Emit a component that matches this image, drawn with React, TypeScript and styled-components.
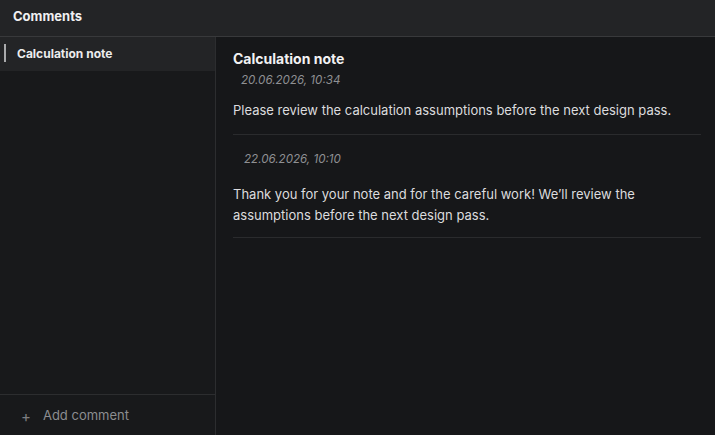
import React from "react";
import styled, { createGlobalStyle } from "styled-components";

const Global = createGlobalStyle`
  html, body { margin: 0; padding: 0; background: #161719; }
  body { font-family: Inter, "Noto Sans", sans-serif; -webkit-font-smoothing: antialiased; }
  #root { height: 435px; }
`;

const Frame = styled.div`
  width: 715px;
  height: 435px;
  display: flex;
  flex-direction: column;
  background: #161719;
  color: #e6e6e7;
  overflow: hidden;
`;

const Header = styled.header`
  height: 37px;
  box-sizing: border-box;
  flex: none;
  display: flex;
  align-items: center;
  padding: 0 13px 4px;
  background: #232426;
  border-bottom: 1px solid #38393b;
  font-size: 13px;
  font-weight: 700;
  color: #f0f0f1;
`;

const Body = styled.div`
  flex: 1;
  display: flex;
  min-height: 0;
`;

const Sidebar = styled.aside`
  width: 215px;
  flex: none;
  display: flex;
  flex-direction: column;
  background: #18191b;
  border-right: 1px solid #2c2d2f;
`;

const List = styled.div`
  flex: 1;
  display: flex;
  flex-direction: column;
`;

const Item = styled.div<{ $active?: boolean }>`
  position: relative;
  height: 34px;
  display: flex;
  align-items: center;
  padding-left: 17px;
  padding-bottom: 1px;
  box-sizing: border-box;
  background: ${(p) => (p.$active ? "#232426" : "transparent")};
  font-size: 12px;
  font-weight: 700;
  color: #ececed;
  &::before {
    content: "";
    display: ${(p) => (p.$active ? "block" : "none")};
    position: absolute;
    left: 4px;
    top: 7px;
    width: 2px;
    height: 18px;
    background: #a9aaac;
  }
`;

const Footer = styled.div`
  height: 41px;
  flex: none;
  display: flex;
  align-items: center;
  gap: 12px;
  padding-left: 21px;
  box-sizing: border-box;
  border-top: 1px solid #2c2d2f;
  font-size: 13px;
  color: #8c8d90;
`;

const Plus = styled.span`
  font-size: 15px;
  line-height: 1;
  margin-top: 2px;
  color: #7d7e81;
`;

const Main = styled.main`
  flex: 1;
  display: flex;
  flex-direction: column;
  padding: 13px 14px 0 17px;
  background: #161719;
`;

const Title = styled.h2`
  margin: 0;
  font-size: 14px;
  font-weight: 700;
  color: #f2f2f3;
  line-height: 18px;
`;

const Entry = styled.div<{ $first?: boolean }>`
  display: flex;
  flex-direction: column;
  padding-top: ${(p) => (p.$first ? "5px" : "17px")};
  padding-bottom: ${(p) => (p.$first ? "13px" : "11px")};
  border-bottom: 1px solid #2a2b2d;
`;

const DateText = styled.div<{ $indent: number }>`
  padding-left: ${(p) => p.$indent}px;
  font-size: 11.6px;
  font-style: italic;
  color: #8f9093;
  line-height: 14px;
`;

const Text = styled.p<{ $gap: number }>`
  margin: ${(p) => p.$gap}px 0 0;
  font-size: 13px;
  line-height: 21px;
  color: #dcdcde;
`;

export default function App() {
  return (
    <>
      <Global />
      <Frame>
        <Header>Comments</Header>
        <Body>
          <Sidebar>
            <List>
              <Item $active>Calculation note</Item>
            </List>
            <Footer>
              <Plus>+</Plus>
              <span>Add comment</span>
            </Footer>
          </Sidebar>
          <Main>
            <Title>Calculation note</Title>
            <Entry $first>
              <DateText $indent={8}>20.06.2026, 10:34</DateText>
              <Text $gap={13}>Please review the calculation assumptions before the next design pass.</Text>
            </Entry>
            <Entry>
              <DateText $indent={11}>22.06.2026, 10:10</DateText>
              <Text $gap={18}>
                Thank you for your note and for the careful work! We’ll review the assumptions before the next design pass.
              </Text>
            </Entry>
          </Main>
        </Body>
      </Frame>
    </>
  );
}
